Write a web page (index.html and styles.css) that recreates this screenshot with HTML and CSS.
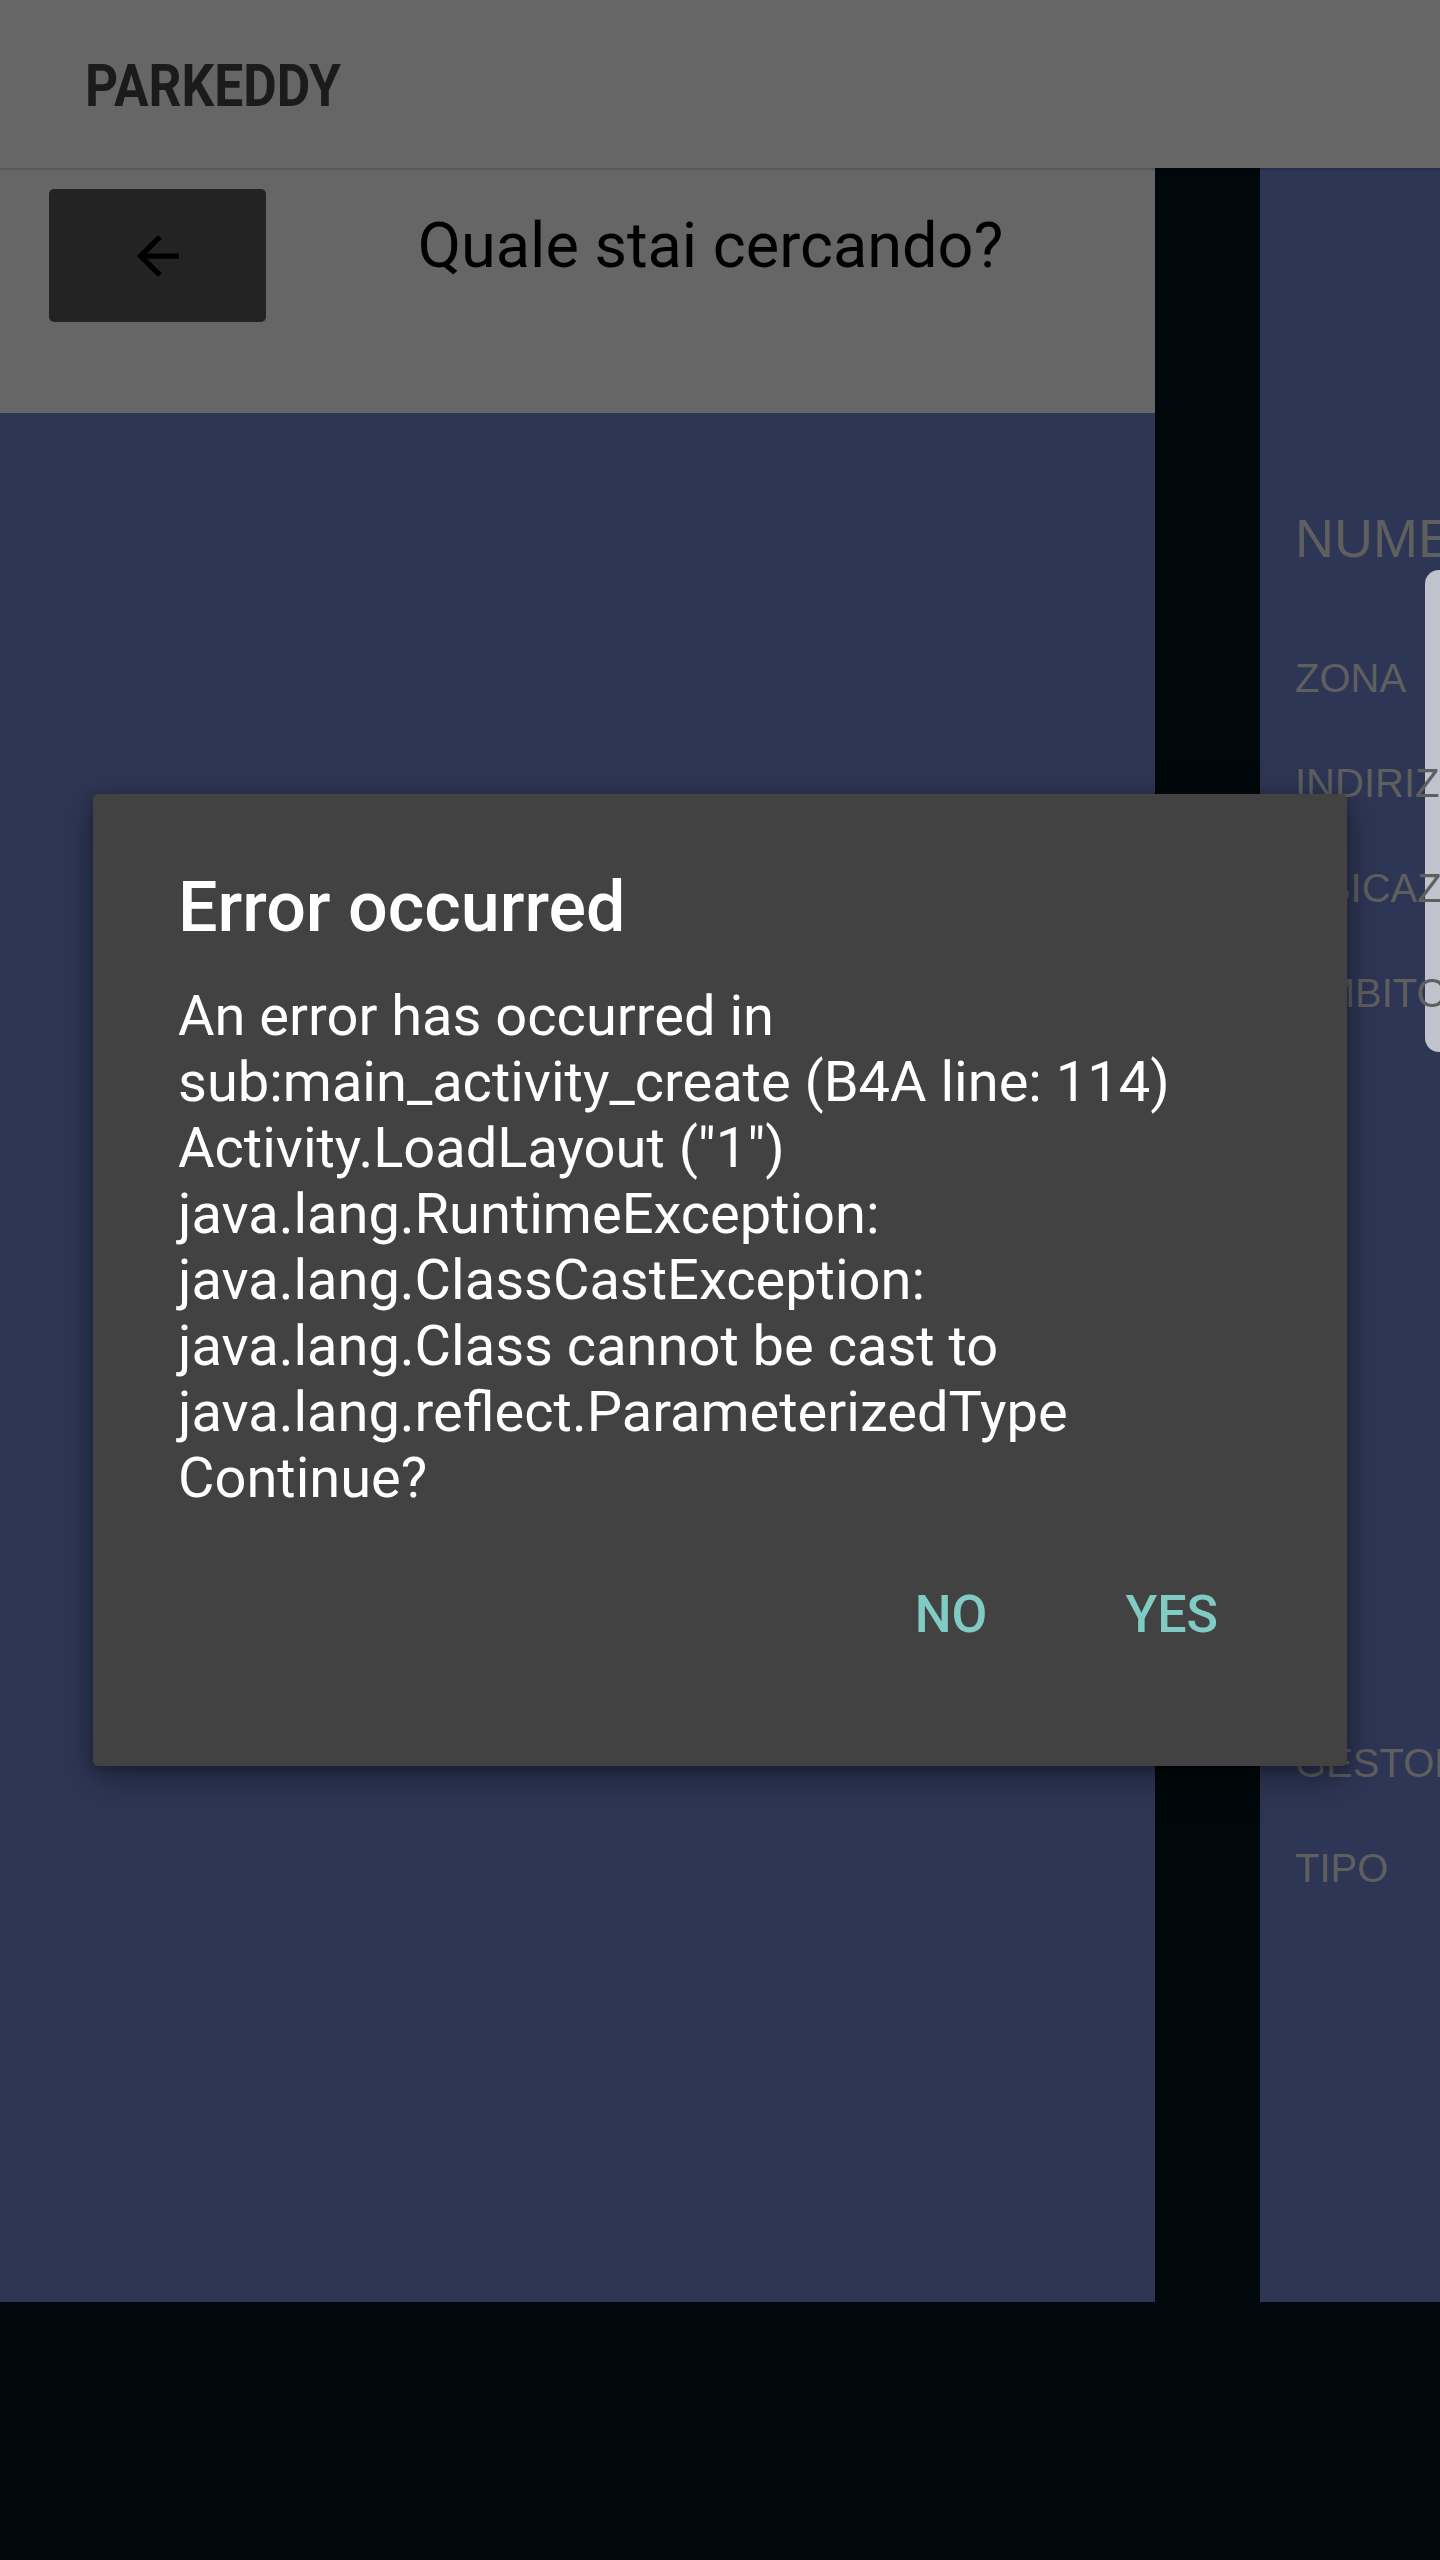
FILE: index.html
```
<!DOCTYPE html>
<html lang="it">
<head>
<meta charset="utf-8">
<title>PARKEDDY</title>
<link rel="stylesheet" href="styles.css">
</head>
<body>
<div class="screen">
  <header class="appbar"><span class="brand">PARKEDDY</span></header>
  <div class="main">
    <section class="left">
      <div class="search-head">
        <button class="back" type="button" aria-label="Indietro">
          <svg viewBox="4 4 16 16" width="42" height="42"><path d="M20 11H7.83l5.59-5.59L12 4l-8 8 8 8 1.41-1.41L7.83 13H20v-2z" fill="#000"/></svg>
        </button>
        <h2 class="question">Quale stai cercando?</h2>
      </div>
    </section>
    <div class="divider"></div>
    <section class="right">
      <div class="card"></div>
      <div class="field heading">NUMERO</div>
      <div class="field">ZONA</div>
      <div class="field">INDIRIZZO</div>
      <div class="field">UBICAZIONE</div>
      <div class="field">AMBITO</div>
      <div class="field gap">GESTORE</div>
      <div class="field">TIPO</div>
    </section>
  </div>
  <div class="navbar"></div>

  <div class="dialog" role="dialog">
    <h1 class="dialog-title">Error occurred</h1>
    <p class="dialog-body">An error has occurred in<br>sub:main_activity_create (B4A line: 114)<br>Activity.LoadLayout ("1")<br>java.lang.RuntimeException:<br>java.lang.ClassCastException:<br>java.lang.Class cannot be cast to<br>java.lang.reflect.ParameterizedType<br>Continue?</p>
    <div class="dialog-actions">
      <button class="action" type="button">NO</button>
      <button class="action" type="button">YES</button>
    </div>
  </div>
</div>
</body>
</html>
```
FILE: styles.css
```
* { box-sizing: border-box; }
html, body { margin: 0; padding: 0; }
body {
  background: #01080b;
  font-family: Roboto, "Noto Sans", sans-serif;
}
.screen {
  position: relative;
  width: 1440px;
  height: 2560px;
  overflow: hidden;
  display: flex;
  flex-direction: column;
  background: #01080b;
}
.appbar {
  height: 168px;
  flex: none;
  background: #666666;
  padding: 56px 0 0 85px;
  box-shadow: 0 1px 3px rgba(0,0,0,0.25);
  position: relative;
  z-index: 2;
}
.brand {
  display: inline-block;
  font-family: Roboto, sans-serif;
  font-weight: 700;
  font-size: 60px;
  line-height: 60px;
  color: #1b1b1b;
  transform: scaleX(0.858);
  transform-origin: left center;
}
.main {
  height: 2134px;
  flex: none;
  display: flex;
}
.left {
  width: 1155px;
  background: #2e3655;
}
.search-head {
  height: 245px;
  background: #666666;
  display: flex;
  align-items: flex-start;
  padding: 21px 0 0 49px;
}
.back {
  width: 217px;
  height: 133px;
  border: 0;
  border-radius: 5px;
  background: #232323;
  display: flex;
  align-items: center;
  justify-content: center;
  padding: 0;
  flex: none;
}
.question {
  flex: 1;
  margin: 26px 0 0 0;
  text-align: center;
  font-family: Roboto, sans-serif;
  font-weight: 400;
  font-size: 63px;
  line-height: 62px;
  color: #000;
}
.divider {
  width: 105px;
  background: #01080b;
}
.right {
  width: 180px;
  background: #2e3655;
  position: relative;
  overflow: hidden;
  padding: 342px 0 0 35px;
  font-family: "Liberation Sans", Arial, sans-serif;
  color: #5f5f5f;
}
.card {
  position: absolute;
  left: 165px;
  top: 402px;
  width: 100px;
  height: 482px;
  background: #c0c2cc;
  border-radius: 14px 0 0 14px;
}
.field {
  position: relative;
  font-size: 40px;
  line-height: 105px;
  white-space: nowrap;
}
.field.heading {
  font-size: 54px;
  line-height: 56px;
  margin-bottom: 60px;
}
.field.gap { margin-top: 665px; }
.navbar {
  flex: 1;
  background: #01080b;
}
.dialog {
  position: absolute;
  left: 93px;
  top: 794px;
  width: 1254px;
  height: 972px;
  background: #424242;
  border-radius: 5px;
  padding: 79px 120px 0 85px;
  box-shadow: 0 12px 40px rgba(0,0,0,0.35), 0 4px 12px rgba(0,0,0,0.25);
  color: #ffffff;
  z-index: 5;
}
.dialog-title {
  margin: 0;
  font-family: Roboto, sans-serif;
  font-weight: 500;
  font-size: 70px;
  line-height: 68px;
}
.dialog-body {
  margin: 42px 0 0 0;
  font-family: Roboto, sans-serif;
  font-weight: 400;
  font-size: 56px;
  line-height: 66px;
  white-space: nowrap;
}
.dialog-actions {
  margin-top: 78px;
  padding-right: 9px;
  display: flex;
  justify-content: flex-end;
  gap: 138px;
}
.action {
  border: 0;
  background: none;
  padding: 0;
  font-family: Roboto, sans-serif;
  font-weight: 500;
  font-size: 52px;
  line-height: 51px;
  color: #80cbc4;
}
```
